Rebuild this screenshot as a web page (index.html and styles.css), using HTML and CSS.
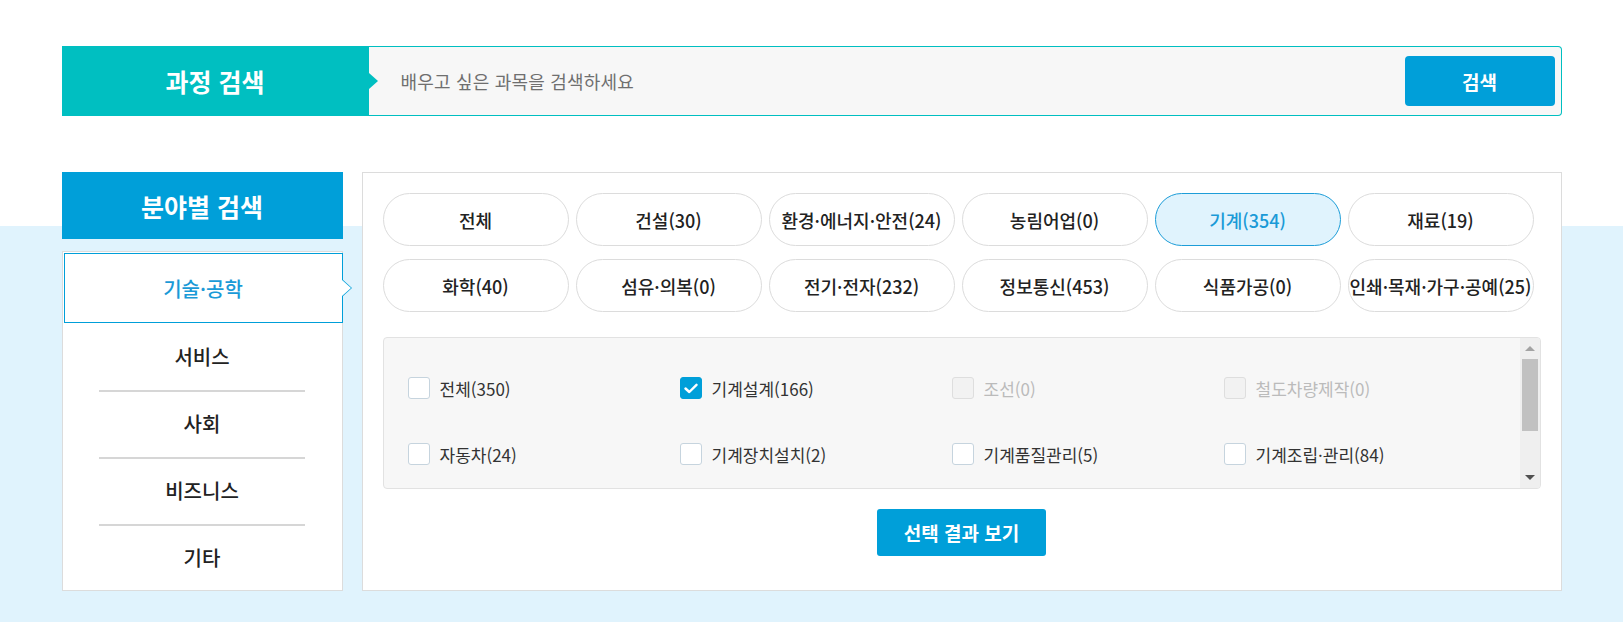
FILE: index.html
```html
<!DOCTYPE html>
<html lang="ko">
<head>
  <meta charset="UTF-8">
  <title>과정 검색</title>
  <link rel="stylesheet" href="styles.css">
</head>
<body>

<div class="course-search">
  <div class="search-label">과정 검색</div>
  <div class="search-box">
    <input type="text" class="search-input" placeholder="배우고 싶은 과목을 검색하세요">
    <button class="search-btn">검색</button>
  </div>
</div>

<div class="field-area">
  <div class="field-inner">
    <div class="field-side">
      <h3 class="field-title">분야별 검색</h3>
      <ul class="field-list">
        <li class="field-item active">기술·공학</li>
        <li class="field-item">서비스</li>
        <li class="field-item">사회</li>
        <li class="field-item">비즈니스</li>
        <li class="field-item">기타</li>
      </ul>
    </div>

    <div class="field-panel">
      <div class="pill-grid">
        <button class="pill">전체</button>
        <button class="pill">건설(30)</button>
        <button class="pill">환경·에너지·안전(24)</button>
        <button class="pill">농림어업(0)</button>
        <button class="pill active">기계(354)</button>
        <button class="pill">재료(19)</button>
        <button class="pill">화학(40)</button>
        <button class="pill">섬유·의복(0)</button>
        <button class="pill">전기·전자(232)</button>
        <button class="pill">정보통신(453)</button>
        <button class="pill">식품가공(0)</button>
        <button class="pill">인쇄·목재·가구·공예(25)</button>
      </div>

      <div class="check-box">
        <div class="check-list">
          <label class="check-item"><span class="check"></span>전체(350)</label>
          <label class="check-item"><span class="check on"><svg width="14" height="11" viewBox="0 0 14 11"><path d="M1.5 5.5 L5.3 9 L12.5 1.8" fill="none" stroke="#fff" stroke-width="2.4" stroke-linecap="round" stroke-linejoin="round"/></svg></span>기계설계(166)</label>
          <label class="check-item disabled"><span class="check"></span>조선(0)</label>
          <label class="check-item disabled"><span class="check"></span>철도차량제작(0)</label>
          <label class="check-item"><span class="check"></span>자동차(24)</label>
          <label class="check-item"><span class="check"></span>기계장치설치(2)</label>
          <label class="check-item"><span class="check"></span>기계품질관리(5)</label>
          <label class="check-item"><span class="check"></span>기계조립·관리(84)</label>
        </div>
        <div class="scrollbar">
          <div class="scroll-btn"><span class="arrow-up"></span></div>
          <div class="scroll-thumb"></div>
          <div class="scroll-space"></div>
          <div class="scroll-btn"><span class="arrow-down"></span></div>
        </div>
      </div>

      <div class="result-row">
        <button class="result-btn">선택 결과 보기</button>
      </div>
    </div>
  </div>
</div>

</body>
</html>
```

FILE: styles.css
```css
:root {
  --teal: #00bfc1;
  --blue: #009fd9;
  --blue-text: #1a9ad7;
  --band: #e0f3fd;
  --line: #dcdcdc;
}

body {
  margin: 0;
  font-family: "Noto Sans CJK KR", "Noto Sans", sans-serif;
  color: #222;
  background: #fff;
}

button,
input {
  font-family: inherit;
}

/* top course search */
.course-search {
  width: 1500px;
  height: 70px;
  margin: 46px auto 0;
  display: flex;
}

.search-label {
  position: relative;
  width: 307px;
  background: var(--teal);
  color: #fff;
  font-size: 25px;
  font-weight: 700;
  display: flex;
  align-items: center;
  justify-content: center;
}

.search-label::after {
  content: "";
  position: absolute;
  right: -9px;
  top: 50%;
  margin-top: -8px;
  border-left: 9px solid var(--teal);
  border-top: 8px solid transparent;
  border-bottom: 8px solid transparent;
}

.search-box {
  flex: 1;
  display: flex;
  align-items: center;
  background: #f7f7f7;
  border: 1px solid var(--teal);
  border-left: 0;
  border-radius: 0 4px 4px 0;
  padding: 0 6px 0 32px;
}

.search-input {
  flex: 1;
  border: none;
  background: none;
  outline: none;
  font-size: 18px;
  letter-spacing: 0.2px;
  color: #333;
  padding: 0;
}

.search-input::placeholder {
  color: #6f6f6f;
}

.search-btn {
  width: 150px;
  height: 50px;
  background: var(--blue);
  color: #fff;
  border: none;
  border-radius: 4px;
  font-size: 19px;
  font-weight: 700;
  cursor: pointer;
}

/* field search */
.field-area {
  margin-top: 56px;
  padding-bottom: 40px;
  background: linear-gradient(#fff 54px, var(--band) 54px);
}

.field-inner {
  width: 1500px;
  margin: 0 auto;
  display: flex;
  gap: 19px;
}

.field-side {
  width: 281px;
  flex: none;
}

.field-title {
  margin: 0 0 12px;
  height: 67px;
  background: var(--blue);
  color: #fff;
  font-size: 25px;
  font-weight: 700;
  display: flex;
  align-items: center;
  justify-content: center;
}

.field-list {
  list-style: none;
  margin: 0;
  padding: 1px;
  height: 340px;
  box-sizing: border-box;
  background: #fff;
  border: 1px solid var(--line);
}

.field-item {
  height: 67px;
  display: flex;
  align-items: center;
  justify-content: center;
  font-size: 20px;
  font-weight: 500;
  background: linear-gradient(#d6d6d6, #d6d6d6) center top / 206px 2px no-repeat;
  cursor: pointer;
}

.field-item.active + .field-item {
  background: none;
}

.field-item.active {
  position: relative;
  height: 70px;
  box-sizing: border-box;
  border: 1px solid var(--blue);
  color: var(--blue-text);
  background: #fff;
  margin-right: -2px;
}

.field-item.active::before,
.field-item.active::after {
  content: "";
  position: absolute;
  top: 50%;
  border-style: solid;
  border-color: transparent;
}

.field-item.active::before {
  left: 100%;
  margin-top: -9px;
  border-width: 9px 0 9px 10px;
  border-left-color: var(--blue);
}

.field-item.active::after {
  left: 100%;
  margin-top: -8px;
  border-width: 8px 0 8px 9px;
  border-left-color: #fff;
}

.field-panel {
  flex: 1;
  height: 419px;
  box-sizing: border-box;
  background: #fff;
  border: 1px solid var(--line);
  padding: 20px 20px 34px;
}

.pill-grid {
  display: grid;
  grid-template-columns: repeat(6, 186px);
  column-gap: 7px;
  row-gap: 13px;
}

.pill {
  height: 53px;
  padding: 0;
  background: #fff;
  border: 1px solid var(--line);
  border-radius: 27px;
  font-size: 18px;
  font-weight: 500;
  color: #222;
  white-space: nowrap;
  cursor: pointer;
}

.pill.active {
  background: var(--band);
  border-color: #1d9dd8;
  color: var(--blue-text);
}

.check-box {
  margin-top: 25px;
  height: 152px;
  box-sizing: border-box;
  display: flex;
  background: #f7f7f7;
  border: 1px solid #e2e2e2;
  border-radius: 4px;
  overflow: hidden;
}

.check-list {
  flex: 1;
  display: grid;
  grid-template-columns: repeat(4, 272px);
  grid-auto-rows: 22px;
  row-gap: 44px;
  align-content: start;
  padding: 39px 0 0 24px;
}

.check-item {
  display: flex;
  align-items: center;
  gap: 10px;
  font-size: 17px;
  color: #333;
  cursor: pointer;
}

.check {
  width: 22px;
  height: 22px;
  box-sizing: border-box;
  flex: none;
  background: #fff;
  border: 1px solid #c6d4de;
  border-radius: 3px;
  display: flex;
  align-items: center;
  justify-content: center;
}

.check.on {
  background: var(--blue);
  border-color: var(--blue);
}

.check-item.disabled {
  color: #bbb;
}

.check-item.disabled .check {
  background: #f2f2f2;
  border-color: #dedede;
}

.scrollbar {
  width: 20px;
  flex: none;
  background: #efefef;
  display: flex;
  flex-direction: column;
  align-items: center;
}

.scroll-btn {
  height: 21px;
  width: 100%;
  display: flex;
  align-items: center;
  justify-content: center;
}

.arrow-up {
  border-left: 5px solid transparent;
  border-right: 5px solid transparent;
  border-bottom: 5px solid #a3a3a3;
}

.arrow-down {
  border-left: 5px solid transparent;
  border-right: 5px solid transparent;
  border-top: 5px solid #505050;
}

.scroll-thumb {
  width: 16px;
  height: 72px;
  background: #c1c1c1;
}

.scroll-space {
  flex: 1;
}

.result-row {
  margin-top: 20px;
  text-align: center;
}

.result-btn {
  width: 169px;
  height: 47px;
  background: var(--blue);
  color: #fff;
  border: none;
  border-radius: 3px;
  font-size: 19px;
  font-weight: 700;
  cursor: pointer;
}
```
